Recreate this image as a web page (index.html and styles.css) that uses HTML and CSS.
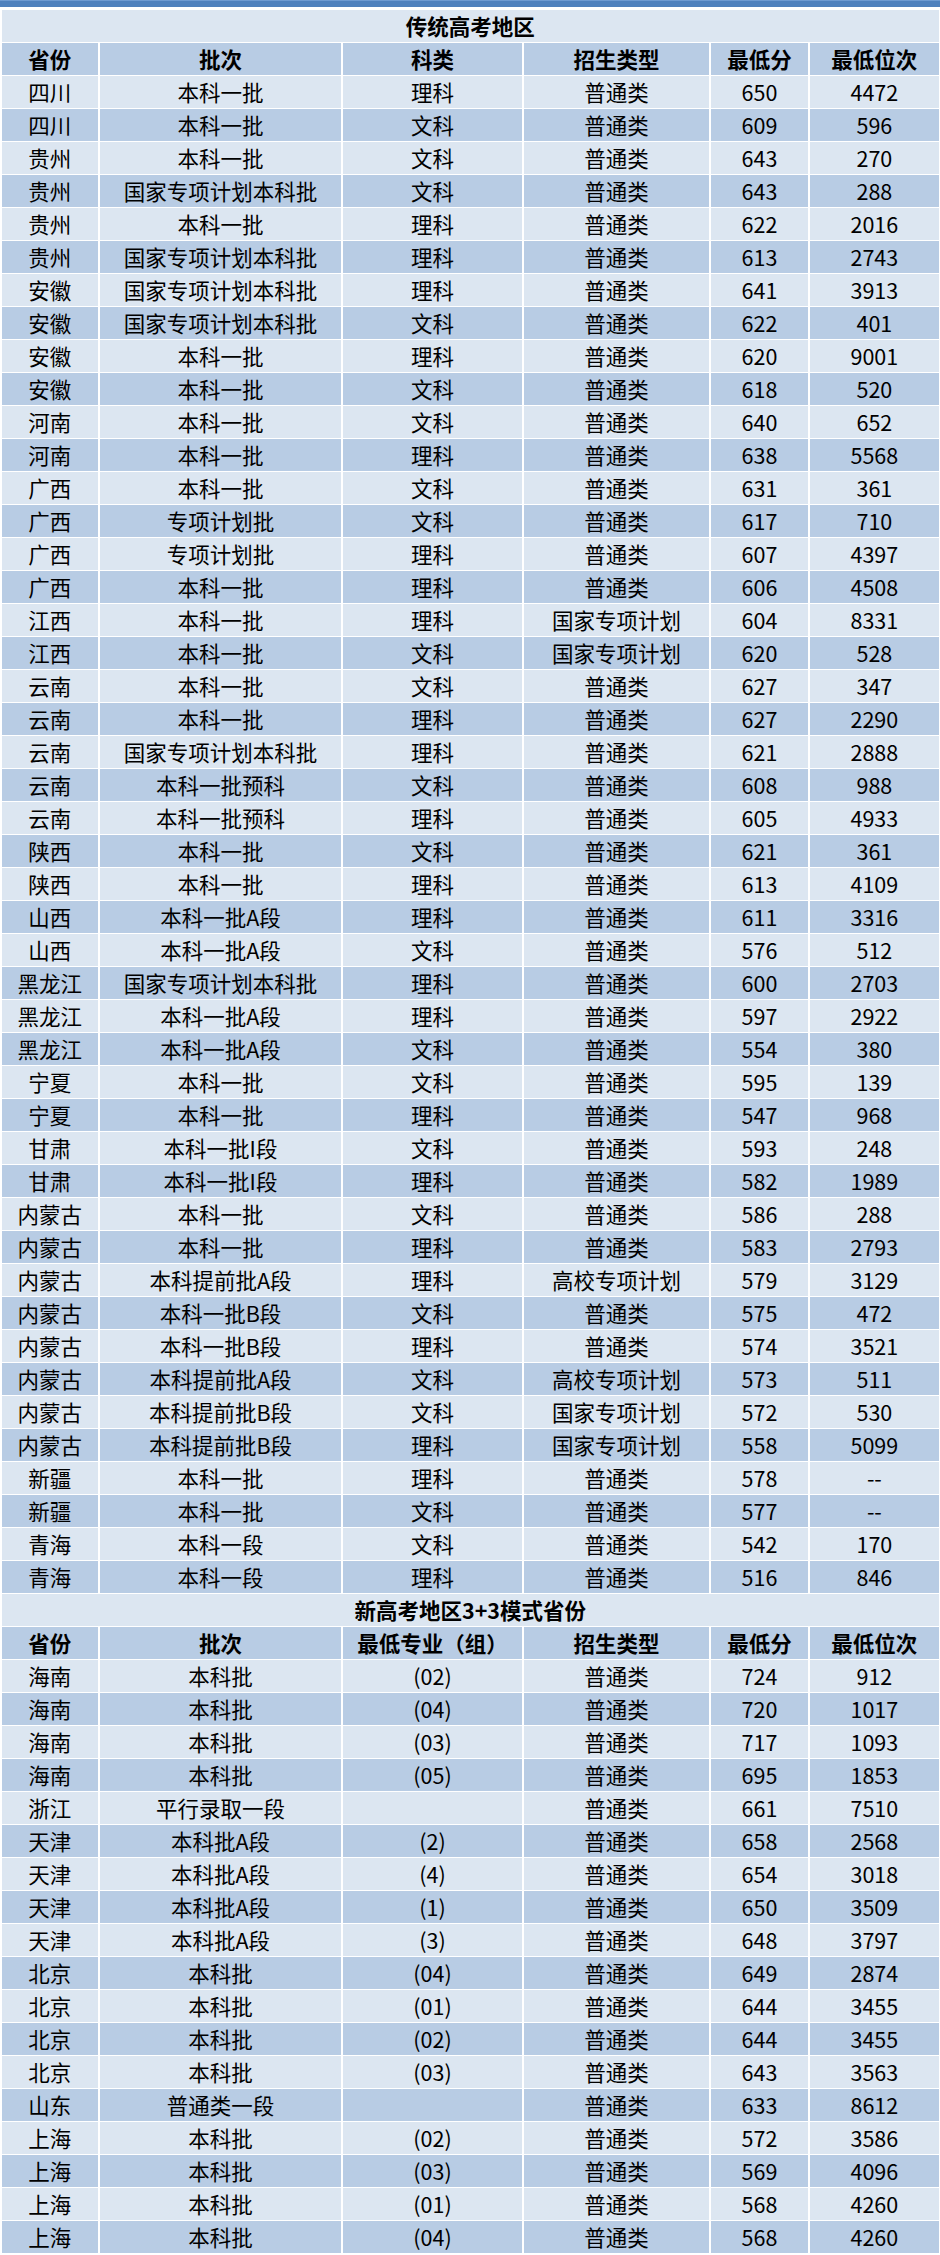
FILE: index.html
```html
<!DOCTYPE html>
<html lang="zh-CN">
<head>
<meta charset="utf-8">
<title>录取分数</title>
<link rel="stylesheet" href="styles.css">
</head>
<body>
<div class="bar"></div>
<div class="sheet">
  <div class="row title"><div>传统高考地区</div></div>
  <div class="row head"><div>省份</div><div>批次</div><div>科类</div><div>招生类型</div><div>最低分</div><div>最低位次</div></div>
  <div class="row"><div>四川</div><div>本科一批</div><div>理科</div><div>普通类</div><div>650</div><div>4472</div></div>
  <div class="row"><div>四川</div><div>本科一批</div><div>文科</div><div>普通类</div><div>609</div><div>596</div></div>
  <div class="row"><div>贵州</div><div>本科一批</div><div>文科</div><div>普通类</div><div>643</div><div>270</div></div>
  <div class="row"><div>贵州</div><div>国家专项计划本科批</div><div>文科</div><div>普通类</div><div>643</div><div>288</div></div>
  <div class="row"><div>贵州</div><div>本科一批</div><div>理科</div><div>普通类</div><div>622</div><div>2016</div></div>
  <div class="row"><div>贵州</div><div>国家专项计划本科批</div><div>理科</div><div>普通类</div><div>613</div><div>2743</div></div>
  <div class="row"><div>安徽</div><div>国家专项计划本科批</div><div>理科</div><div>普通类</div><div>641</div><div>3913</div></div>
  <div class="row"><div>安徽</div><div>国家专项计划本科批</div><div>文科</div><div>普通类</div><div>622</div><div>401</div></div>
  <div class="row"><div>安徽</div><div>本科一批</div><div>理科</div><div>普通类</div><div>620</div><div>9001</div></div>
  <div class="row"><div>安徽</div><div>本科一批</div><div>文科</div><div>普通类</div><div>618</div><div>520</div></div>
  <div class="row"><div>河南</div><div>本科一批</div><div>文科</div><div>普通类</div><div>640</div><div>652</div></div>
  <div class="row"><div>河南</div><div>本科一批</div><div>理科</div><div>普通类</div><div>638</div><div>5568</div></div>
  <div class="row"><div>广西</div><div>本科一批</div><div>文科</div><div>普通类</div><div>631</div><div>361</div></div>
  <div class="row"><div>广西</div><div>专项计划批</div><div>文科</div><div>普通类</div><div>617</div><div>710</div></div>
  <div class="row"><div>广西</div><div>专项计划批</div><div>理科</div><div>普通类</div><div>607</div><div>4397</div></div>
  <div class="row"><div>广西</div><div>本科一批</div><div>理科</div><div>普通类</div><div>606</div><div>4508</div></div>
  <div class="row"><div>江西</div><div>本科一批</div><div>理科</div><div>国家专项计划</div><div>604</div><div>8331</div></div>
  <div class="row"><div>江西</div><div>本科一批</div><div>文科</div><div>国家专项计划</div><div>620</div><div>528</div></div>
  <div class="row"><div>云南</div><div>本科一批</div><div>文科</div><div>普通类</div><div>627</div><div>347</div></div>
  <div class="row"><div>云南</div><div>本科一批</div><div>理科</div><div>普通类</div><div>627</div><div>2290</div></div>
  <div class="row"><div>云南</div><div>国家专项计划本科批</div><div>理科</div><div>普通类</div><div>621</div><div>2888</div></div>
  <div class="row"><div>云南</div><div>本科一批预科</div><div>文科</div><div>普通类</div><div>608</div><div>988</div></div>
  <div class="row"><div>云南</div><div>本科一批预科</div><div>理科</div><div>普通类</div><div>605</div><div>4933</div></div>
  <div class="row"><div>陕西</div><div>本科一批</div><div>文科</div><div>普通类</div><div>621</div><div>361</div></div>
  <div class="row"><div>陕西</div><div>本科一批</div><div>理科</div><div>普通类</div><div>613</div><div>4109</div></div>
  <div class="row"><div>山西</div><div>本科一批A段</div><div>理科</div><div>普通类</div><div>611</div><div>3316</div></div>
  <div class="row"><div>山西</div><div>本科一批A段</div><div>文科</div><div>普通类</div><div>576</div><div>512</div></div>
  <div class="row"><div>黑龙江</div><div>国家专项计划本科批</div><div>理科</div><div>普通类</div><div>600</div><div>2703</div></div>
  <div class="row"><div>黑龙江</div><div>本科一批A段</div><div>理科</div><div>普通类</div><div>597</div><div>2922</div></div>
  <div class="row"><div>黑龙江</div><div>本科一批A段</div><div>文科</div><div>普通类</div><div>554</div><div>380</div></div>
  <div class="row"><div>宁夏</div><div>本科一批</div><div>文科</div><div>普通类</div><div>595</div><div>139</div></div>
  <div class="row"><div>宁夏</div><div>本科一批</div><div>理科</div><div>普通类</div><div>547</div><div>968</div></div>
  <div class="row"><div>甘肃</div><div>本科一批I段</div><div>文科</div><div>普通类</div><div>593</div><div>248</div></div>
  <div class="row"><div>甘肃</div><div>本科一批I段</div><div>理科</div><div>普通类</div><div>582</div><div>1989</div></div>
  <div class="row"><div>内蒙古</div><div>本科一批</div><div>文科</div><div>普通类</div><div>586</div><div>288</div></div>
  <div class="row"><div>内蒙古</div><div>本科一批</div><div>理科</div><div>普通类</div><div>583</div><div>2793</div></div>
  <div class="row"><div>内蒙古</div><div>本科提前批A段</div><div>理科</div><div>高校专项计划</div><div>579</div><div>3129</div></div>
  <div class="row"><div>内蒙古</div><div>本科一批B段</div><div>文科</div><div>普通类</div><div>575</div><div>472</div></div>
  <div class="row"><div>内蒙古</div><div>本科一批B段</div><div>理科</div><div>普通类</div><div>574</div><div>3521</div></div>
  <div class="row"><div>内蒙古</div><div>本科提前批A段</div><div>文科</div><div>高校专项计划</div><div>573</div><div>511</div></div>
  <div class="row"><div>内蒙古</div><div>本科提前批B段</div><div>文科</div><div>国家专项计划</div><div>572</div><div>530</div></div>
  <div class="row"><div>内蒙古</div><div>本科提前批B段</div><div>理科</div><div>国家专项计划</div><div>558</div><div>5099</div></div>
  <div class="row"><div>新疆</div><div>本科一批</div><div>理科</div><div>普通类</div><div>578</div><div>--</div></div>
  <div class="row"><div>新疆</div><div>本科一批</div><div>文科</div><div>普通类</div><div>577</div><div>--</div></div>
  <div class="row"><div>青海</div><div>本科一段</div><div>文科</div><div>普通类</div><div>542</div><div>170</div></div>
  <div class="row"><div>青海</div><div>本科一段</div><div>理科</div><div>普通类</div><div>516</div><div>846</div></div>
  <div class="row title"><div>新高考地区3+3模式省份</div></div>
  <div class="row head"><div>省份</div><div>批次</div><div>最低专业（组）</div><div>招生类型</div><div>最低分</div><div>最低位次</div></div>
  <div class="row"><div>海南</div><div>本科批</div><div>(02)</div><div>普通类</div><div>724</div><div>912</div></div>
  <div class="row"><div>海南</div><div>本科批</div><div>(04)</div><div>普通类</div><div>720</div><div>1017</div></div>
  <div class="row"><div>海南</div><div>本科批</div><div>(03)</div><div>普通类</div><div>717</div><div>1093</div></div>
  <div class="row"><div>海南</div><div>本科批</div><div>(05)</div><div>普通类</div><div>695</div><div>1853</div></div>
  <div class="row"><div>浙江</div><div>平行录取一段</div><div></div><div>普通类</div><div>661</div><div>7510</div></div>
  <div class="row"><div>天津</div><div>本科批A段</div><div>(2)</div><div>普通类</div><div>658</div><div>2568</div></div>
  <div class="row"><div>天津</div><div>本科批A段</div><div>(4)</div><div>普通类</div><div>654</div><div>3018</div></div>
  <div class="row"><div>天津</div><div>本科批A段</div><div>(1)</div><div>普通类</div><div>650</div><div>3509</div></div>
  <div class="row"><div>天津</div><div>本科批A段</div><div>(3)</div><div>普通类</div><div>648</div><div>3797</div></div>
  <div class="row"><div>北京</div><div>本科批</div><div>(04)</div><div>普通类</div><div>649</div><div>2874</div></div>
  <div class="row"><div>北京</div><div>本科批</div><div>(01)</div><div>普通类</div><div>644</div><div>3455</div></div>
  <div class="row"><div>北京</div><div>本科批</div><div>(02)</div><div>普通类</div><div>644</div><div>3455</div></div>
  <div class="row"><div>北京</div><div>本科批</div><div>(03)</div><div>普通类</div><div>643</div><div>3563</div></div>
  <div class="row"><div>山东</div><div>普通类一段</div><div></div><div>普通类</div><div>633</div><div>8612</div></div>
  <div class="row"><div>上海</div><div>本科批</div><div>(02)</div><div>普通类</div><div>572</div><div>3586</div></div>
  <div class="row"><div>上海</div><div>本科批</div><div>(03)</div><div>普通类</div><div>569</div><div>4096</div></div>
  <div class="row"><div>上海</div><div>本科批</div><div>(01)</div><div>普通类</div><div>568</div><div>4260</div></div>
  <div class="row"><div>上海</div><div>本科批</div><div>(04)</div><div>普通类</div><div>568</div><div>4260</div></div>
</div>
</body>
</html>
```

FILE: styles.css
```css
html, body {
  margin: 0;
  padding: 0;
  background: #ffffff;
}

body {
  font-family: "Noto Sans CJK SC", "Noto Sans", sans-serif;
  font-size: 21.5px;
  color: #000000;
}

.bar {
  height: 6px;
  border-top: 1px solid #6f9bd1;
  background: #4f81bd;
}

.sheet {
  display: flex;
  flex-direction: column;
  gap: 1.5px;
  padding: 3px 1px 0 1.5px;
}

.row {
  display: grid;
  grid-template-columns: 96.75px 241.5px 179.5px 185.5px 97.5px 1fr;
  column-gap: 1.5px;
  height: 31.5px;
}

.row > div {
  text-align: center;
  line-height: 31.5px;
  white-space: nowrap;
  overflow: hidden;
}

.row:nth-child(odd) > div {
  background: #dce6f1;
}

.row:nth-child(even) > div {
  background: #b8cce4;
}

.row.title {
  display: block;
}

.row.title > div,
.row.head > div {
  font-weight: 700;
}
```
